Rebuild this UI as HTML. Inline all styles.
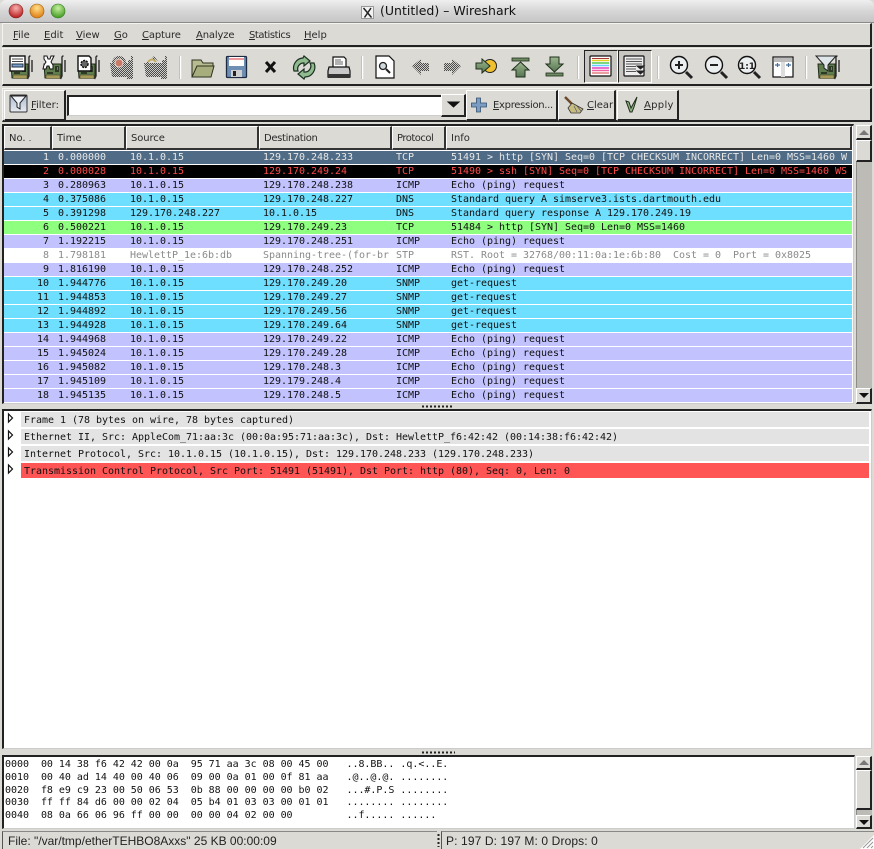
<!DOCTYPE html>
<html><head><meta charset="utf-8"><title>Wireshark</title>
<style>
html,body{margin:0;padding:0;background:#dcdad5}
body{width:874px;height:849px;overflow:hidden;position:relative;font-family:"DejaVu Sans","Liberation Sans",sans-serif;font-size:10px;color:#2a2a2a}
div,span.t{position:absolute;box-sizing:border-box}
.t{white-space:pre}
.bar{background:#dcdad5;border-top:1px solid #f4f3f0;border-left:1px solid #f4f3f0;border-right:2px solid #222;border-bottom:2px solid #222}
.m{top:30px;line-height:12px;font-size:10px}
u{text-decoration:underline}
.btn{top:90px;height:31px;background:#dcdad5;border-top:1px solid #fff;border-left:1px solid #fff;border-right:2px solid #222;border-bottom:2px solid #222}
.bt{top:100px;line-height:12px;font-size:10px}
.h{top:126px;height:24px;background:#dcdad5;border-top:1px solid #fff;border-left:1px solid #fff;border-right:2px solid #333;border-bottom:2px solid #333;line-height:23px;padding-left:4px;font-size:10px}
.r{left:4px;width:848px;height:13px;overflow:hidden;font:10px/13px "DejaVu Sans Mono","Liberation Mono",monospace;letter-spacing:-.02px;color:#111}
.r span{position:absolute;top:0;white-space:pre}
.n{right:803px;text-align:right}.a{left:54px}.b{left:126px}.c{left:259px}.d{left:392px}.e{left:447px}
.i{background:#c2c2ff}.s{background:#6fdfff}.g{background:#8fff7f}
.sel{background:#4f6b85;color:#e8e8e8}.blk{background:#000;color:#ff4a4a}.w{background:#fff;color:#8a8a8a}
.dr{left:21px;width:848px;height:15px;background:#e3e3e3;font:10px/17px "DejaVu Sans Mono","Liberation Mono",monospace;letter-spacing:-.02px;padding-left:3px;white-space:pre;color:#111}
.hx{left:5px;font:10px/13px "DejaVu Sans Mono","Liberation Mono",monospace;letter-spacing:-.03px;white-space:pre;color:#111}
.sb{background:#bdbbb6;border-left:1px solid #8e8c88}
.sbb{background:#dcdad5;border-top:1px solid #fff;border-left:1px solid #fff;border-right:2px solid #222;border-bottom:2px solid #222}
</style></head><body>

<!-- title bar -->
<div style="left:0;top:0;width:874px;height:23px;background:linear-gradient(#efefef,#d6d6d6 50%,#c6c6c6);border-radius:6px 6px 0 0;border-bottom:1px solid #8a8a8a"></div>
<span class="t" style="left:380px;top:3px;font-size:12.5px;line-height:15px;color:#111">(Untitled) – Wireshark</span>

<!-- bars -->
<div class="bar" style="left:2px;top:23px;width:870px;height:24px"></div>
<div class="bar" style="left:2px;top:48px;width:870px;height:38px"></div>
<div class="bar" style="left:2px;top:88px;width:870px;height:34px"></div>

<span class="t m" style="left:13px"><u>F</u>ile</span>
<span class="t m" style="left:44px"><u>E</u>dit</span>
<span class="t m" style="left:76px"><u>V</u>iew</span>
<span class="t m" style="left:114px"><u>G</u>o</span>
<span class="t m" style="left:142px;letter-spacing:-.15px"><u>C</u>apture</span>
<span class="t m" style="left:196px;letter-spacing:-.15px"><u>A</u>nalyze</span>
<span class="t m" style="left:249px;letter-spacing:-.45px"><u>S</u>tatistics</span>
<span class="t m" style="left:304px"><u>H</u>elp</span>

<!-- toggle buttons -->
<div style="left:584px;top:50px;width:34px;height:33px;background:#c8c6c1;border:1px solid #222;border-right-color:#fff;border-bottom-color:#fff"></div>
<div style="left:618px;top:50px;width:34px;height:33px;background:#c8c6c1;border:1px solid #222;border-right-color:#fff;border-bottom-color:#fff"></div>

<!-- filter row -->
<div class="btn" style="left:4px;width:62px"></div>
<span class="t bt" style="left:31px"><u>F</u>ilter:</span>
<div style="left:67px;top:95px;width:375px;height:21px;background:#fff;border-top:2px solid #222;border-left:2px solid #222;border-bottom:1px solid #ccc"></div>
<div class="btn" style="left:441px;top:94px;width:25px;height:23px"></div>
<div class="btn" style="left:466px;width:92px"></div>
<span class="t bt" style="left:493px;letter-spacing:-.3px"><u>E</u>xpression...</span>
<div class="btn" style="left:558px;width:58px"></div>
<span class="t bt" style="left:587px"><u>C</u>lear</span>
<div class="btn" style="left:617px;width:62px"></div>
<span class="t bt" style="left:644px;letter-spacing:.3px"><u>A</u>pply</span>

<!-- packet list -->
<div style="left:2px;top:124px;width:852px;height:280px;background:#fff;border:2px solid #222;border-right:1px solid #ccc;border-bottom:1px solid #ccc"></div>
<div class="h" style="left:4px;width:48px">No. <span style="font-size:8px">.</span></div>
<div class="h" style="left:52px;width:74px">Time</div>
<div class="h" style="left:126px;width:133px;letter-spacing:-.1px">Source</div>
<div class="h" style="left:259px;width:133px;letter-spacing:-.35px">Destination</div>
<div class="h" style="left:392px;width:54px;letter-spacing:-.5px">Protocol</div>
<div class="h" style="left:446px;width:406px">Info</div>

<div class="r sel" style="top:151px"><span class="n">1</span><span class="a">0.000000</span><span class="b">10.1.0.15</span><span class="c">129.170.248.233</span><span class="d">TCP</span><span class="e">51491 &gt; http [SYN] Seq=0 [TCP CHECKSUM INCORRECT] Len=0 MSS=1460 W</span></div>
<div class="r blk" style="top:165px"><span class="n">2</span><span class="a">0.000028</span><span class="b">10.1.0.15</span><span class="c">129.170.249.24</span><span class="d">TCP</span><span class="e">51490 &gt; ssh [SYN] Seq=0 [TCP CHECKSUM INCORRECT] Len=0 MSS=1460 WS</span></div>
<div class="r i" style="top:179px"><span class="n">3</span><span class="a">0.280963</span><span class="b">10.1.0.15</span><span class="c">129.170.248.238</span><span class="d">ICMP</span><span class="e">Echo (ping) request</span></div>
<div class="r s" style="top:193px"><span class="n">4</span><span class="a">0.375086</span><span class="b">10.1.0.15</span><span class="c">129.170.248.227</span><span class="d">DNS</span><span class="e">Standard query A simserve3.ists.dartmouth.edu</span></div>
<div class="r s" style="top:207px"><span class="n">5</span><span class="a">0.391298</span><span class="b">129.170.248.227</span><span class="c">10.1.0.15</span><span class="d">DNS</span><span class="e">Standard query response A 129.170.249.19</span></div>
<div class="r g" style="top:221px"><span class="n">6</span><span class="a">0.500221</span><span class="b">10.1.0.15</span><span class="c">129.170.249.23</span><span class="d">TCP</span><span class="e">51484 &gt; http [SYN] Seq=0 Len=0 MSS=1460</span></div>
<div class="r i" style="top:235px"><span class="n">7</span><span class="a">1.192215</span><span class="b">10.1.0.15</span><span class="c">129.170.248.251</span><span class="d">ICMP</span><span class="e">Echo (ping) request</span></div>
<div class="r w" style="top:249px"><span class="n">8</span><span class="a">1.798181</span><span class="b">HewlettP_1e:6b:db</span><span class="c">Spanning-tree-(for-br</span><span class="d">STP</span><span class="e">RST. Root = 32768/00:11:0a:1e:6b:80  Cost = 0  Port = 0x8025</span></div>
<div class="r i" style="top:263px"><span class="n">9</span><span class="a">1.816190</span><span class="b">10.1.0.15</span><span class="c">129.170.248.252</span><span class="d">ICMP</span><span class="e">Echo (ping) request</span></div>
<div class="r s" style="top:277px"><span class="n">10</span><span class="a">1.944776</span><span class="b">10.1.0.15</span><span class="c">129.170.249.20</span><span class="d">SNMP</span><span class="e">get-request</span></div>
<div class="r s" style="top:291px"><span class="n">11</span><span class="a">1.944853</span><span class="b">10.1.0.15</span><span class="c">129.170.249.27</span><span class="d">SNMP</span><span class="e">get-request</span></div>
<div class="r s" style="top:305px"><span class="n">12</span><span class="a">1.944892</span><span class="b">10.1.0.15</span><span class="c">129.170.249.56</span><span class="d">SNMP</span><span class="e">get-request</span></div>
<div class="r s" style="top:319px"><span class="n">13</span><span class="a">1.944928</span><span class="b">10.1.0.15</span><span class="c">129.170.249.64</span><span class="d">SNMP</span><span class="e">get-request</span></div>
<div class="r i" style="top:333px"><span class="n">14</span><span class="a">1.944968</span><span class="b">10.1.0.15</span><span class="c">129.170.249.22</span><span class="d">ICMP</span><span class="e">Echo (ping) request</span></div>
<div class="r i" style="top:347px"><span class="n">15</span><span class="a">1.945024</span><span class="b">10.1.0.15</span><span class="c">129.170.249.28</span><span class="d">ICMP</span><span class="e">Echo (ping) request</span></div>
<div class="r i" style="top:361px"><span class="n">16</span><span class="a">1.945082</span><span class="b">10.1.0.15</span><span class="c">129.170.248.3</span><span class="d">ICMP</span><span class="e">Echo (ping) request</span></div>
<div class="r i" style="top:375px"><span class="n">17</span><span class="a">1.945109</span><span class="b">10.1.0.15</span><span class="c">129.179.248.4</span><span class="d">ICMP</span><span class="e">Echo (ping) request</span></div>
<div class="r i" style="top:389px"><span class="n">18</span><span class="a">1.945135</span><span class="b">10.1.0.15</span><span class="c">129.170.248.5</span><span class="d">ICMP</span><span class="e">Echo (ping) request</span></div>

<!-- list scrollbar -->
<div class="sb" style="left:856px;top:125px;width:16px;height:279px"></div>
<div class="sbb" style="left:856px;top:125px;width:16px;height:15px"></div>
<div class="sbb" style="left:856px;top:140px;width:16px;height:22px"></div>
<div class="sbb" style="left:856px;top:388px;width:16px;height:16px"></div>

<!-- details pane -->
<div style="left:2px;top:409px;width:870px;height:340px;background:#fff;border-top:2px solid #222;border-left:2px solid #222;border-bottom:1px solid #ccc;border-right:1px solid #ccc"></div>
<div class="dr" style="top:412px">Frame 1 (78 bytes on wire, 78 bytes captured)</div>
<div class="dr" style="top:429px">Ethernet II, Src: AppleCom_71:aa:3c (00:0a:95:71:aa:3c), Dst: HewlettP_f6:42:42 (00:14:38:f6:42:42)</div>
<div class="dr" style="top:446px">Internet Protocol, Src: 10.1.0.15 (10.1.0.15), Dst: 129.170.248.233 (129.170.248.233)</div>
<div class="dr" style="top:463px;background:#ff5555">Transmission Control Protocol, Src Port: 51491 (51491), Dst Port: http (80), Seq: 0, Len: 0</div>

<!-- hex pane -->
<div style="left:2px;top:755px;width:853px;height:74px;background:#fff;border-top:2px solid #222;border-left:2px solid #222;border-bottom:1px solid #ccc;border-right:1px solid #ccc"></div>
<div class="hx" style="top:758px">0000  00 14 38 f6 42 42 00 0a  95 71 aa 3c 08 00 45 00   ..8.BB.. .q.&lt;..E.</div>
<div class="hx" style="top:771px">0010  00 40 ad 14 40 00 40 06  09 00 0a 01 00 0f 81 aa   .@..@.@. ........</div>
<div class="hx" style="top:784px">0020  f8 e9 c9 23 00 50 06 53  0b 88 00 00 00 00 b0 02   ...#.P.S ........</div>
<div class="hx" style="top:796px">0030  ff ff 84 d6 00 00 02 04  05 b4 01 03 03 00 01 01   ........ ........</div>
<div class="hx" style="top:809px">0040  08 0a 66 06 96 ff 00 00  00 00 04 02 00 00         ..f..... ......</div>
<div class="sb" style="left:856px;top:756px;width:16px;height:73px"></div>
<div class="sbb" style="left:856px;top:756px;width:16px;height:14px"></div>
<div class="sbb" style="left:856px;top:770px;width:16px;height:40px"></div>
<div class="sbb" style="left:856px;top:815px;width:16px;height:14px"></div>

<!-- status bar -->
<div style="left:2px;top:831px;width:435px;height:18px;border-top:1px solid #888;border-left:1px solid #555"></div>
<div style="left:441px;top:831px;width:433px;height:18px;border-top:1px solid #888;border-left:1px solid #555"></div>
<span class="t" style="left:8px;top:835px;font:12px/13px 'Liberation Sans',sans-serif;color:#222">File: "/var/tmp/etherTEHBO8Axxs" 25 KB 00:00:09</span>
<span class="t" style="left:446px;top:835px;font:12px/13px 'Liberation Sans',sans-serif;letter-spacing:.12px;color:#222">P: 197 D: 197 M: 0 Drops: 0</span>

<!-- all icons -->
<svg width="874" height="849" viewBox="0 0 874 849" style="position:absolute;left:0;top:0" xmlns="http://www.w3.org/2000/svg">
<defs>
<radialGradient id="rd" cx=".5" cy=".3" r=".7"><stop offset="0" stop-color="#f8b0b0"/><stop offset="1" stop-color="#b81818"/></radialGradient>
<radialGradient id="or" cx=".5" cy=".3" r=".7"><stop offset="0" stop-color="#ffe08a"/><stop offset="1" stop-color="#e07a10"/></radialGradient>
<radialGradient id="gr" cx=".5" cy=".3" r=".7"><stop offset="0" stop-color="#c8f0a0"/><stop offset="1" stop-color="#3f9a20"/></radialGradient>
<linearGradient id="arr" x1="0" y1="0" x2="0" y2="1"><stop offset="0" stop-color="#9bb78e"/><stop offset="1" stop-color="#577552"/></linearGradient>
<linearGradient id="fn" x1="0" y1="0" x2="0" y2="1"><stop offset="0" stop-color="#a8b8d0"/><stop offset="1" stop-color="#e8ecf2"/></linearGradient>
<pattern id="st" width="2" height="2" patternUnits="userSpaceOnUse"><rect width="2" height="2" fill="#cfcdc8"/><rect width="1" height="1" fill="#4a4a4a"/><rect x="1" y="1" width="1" height="1" fill="#4a4a4a"/></pattern>
<g id="nic">
<path d="M1 9H18V23H2z" fill="#5f7d4e" stroke="#1f2b18"/>
<path d="M3 20h14v3.500H3z" fill="#a59a58" stroke="#3a3a20" stroke-width=".5"/>
<path d="M12 11h4v6h-4zM4 17h6v2H4z" fill="#2e3a26"/>
<path d="M14 12h1v3h-1z" fill="#c55"/>
<path d="M20.500 1q-2 0-1.500 3V21l-1.500 3M22 5V17" fill="none" stroke="#2b2b2b" stroke-width="1.400"/>
</g>
<g id="nicd">
<path d="M0 8H18V5h3V1h2V24H17V22H2z" fill="url(#st)"/>
</g>
</defs>

<!-- traffic lights -->
<circle cx="16" cy="11" r="7" fill="url(#rd)" stroke="#7a2020" stroke-width=".6"/>
<circle cx="37" cy="11" r="7" fill="url(#or)" stroke="#9a6010" stroke-width=".6"/>
<circle cx="58" cy="11" r="7" fill="url(#gr)" stroke="#2f7a20" stroke-width=".6"/>
<!-- X icon -->
<rect x="361.500" y="6.500" width="12" height="12" fill="#f2f2f2" stroke="#999"/>
<path d="M363.500 8l8 9.500M371 8l-6.500 9.500" stroke="#222" stroke-width="1.500" fill="none"/>

<!-- capture interfaces -->
<g transform="translate(10,55)"><use href="#nic"/><rect x="0" y="1" width="15" height="15" fill="#fff" stroke="#111" stroke-width="1.400"/><path d="M2 4h11M2 6.500h11" stroke="#444"/><rect x="2" y="9" width="11" height="3" fill="#7aa0d0" stroke="#234"/></g>
<g transform="translate(43,55)"><use href="#nic"/><path d="M1 1l3 0 1 3h2l1-3h3l-2 4-1 2 2 3 0 4h-3l-1-3h-2l-1 3h-3l1-4 2-3-2-3z" fill="#fff" stroke="#111"/></g>
<g transform="translate(77,55)"><use href="#nic"/><path d="M1 1h11l2 2v13H1z" fill="#fff" stroke="#111" stroke-width="1.400"/><circle cx="7.500" cy="9" r="3.500" fill="#666" stroke="#111" stroke-width="1.500" stroke-dasharray="2 1"/></g>
<g transform="translate(110,55)"><use href="#nicd"/><circle cx="9" cy="8" r="7" fill="url(#st)"/><circle cx="9" cy="8" r="4" fill="#c87a66" stroke="#e8d8d0"/></g>
<g transform="translate(144,55)"><use href="#nicd"/><path d="M1 12A8 9 0 0 1 16 9L10 1z" fill="url(#st)"/><path d="M4 7q4-5 8 0" fill="none" stroke="#c0a858" stroke-width="1.800"/></g>
<path d="M180.500 56V79" stroke="#fff" stroke-width="1.500"/><path d="M179.500 56V79" stroke="#aaa" stroke-width=".6"/>

<!-- open -->
<path d="M192 76V60h9l2 3h10v3h-12l-3 10z" fill="#b8bb90" stroke="#2e3320"/>
<path d="M192 77l5-11h17l-3 11z" fill="#a8ad7e" stroke="#2e3320"/>
<!-- save -->
<rect x="226.500" y="56.500" width="20" height="21" rx="1" fill="#6f8eb3" stroke="#1c2b40" stroke-width="1.300"/>
<rect x="229" y="57" width="15" height="9" fill="#fff"/><path d="M229 59h15" stroke="#d55" stroke-width="1.200"/>
<rect x="231" y="70" width="11" height="7" fill="#cfcfcf"/><rect x="233" y="71" width="3" height="5" fill="#222"/>
<!-- close x -->
<path d="M266 62l9 10M275 62l-9 10" stroke="#111" stroke-width="3" fill="none"/>
<!-- reload -->
<path d="M294 71a10 10 0 0 1 9-13l1-2 6 5-6 5v-3a6 6 0 0 0-6 8z" fill="#8fbb8e" stroke="#1c3022" stroke-width="1.200"/>
<path d="M314 63a10 10 0 0 1-9 14l-1 2-6-5 6-5v3a6 6 0 0 0 6-9z" fill="#8fbb8e" stroke="#1c3022" stroke-width="1.200"/>
<!-- print -->
<path d="M333 57h11l2 2v9h-13z" fill="#fff" stroke="#111" stroke-width="1.200"/><path d="M335 60h6M335 62h8M335 64h8" stroke="#666"/>
<path d="M329 67h20l1 4v6h-22v-6z" fill="#c8c8c8" stroke="#111" stroke-width="1.200"/><rect x="328" y="74" width="22" height="4" fill="#333"/>
<path d="M362.500 56V79" stroke="#fff" stroke-width="1.500"/><path d="M361.500 56V79" stroke="#aaa" stroke-width=".6"/>
<!-- find -->
<path d="M376 56h13l5 5v17h-18z" fill="#fff" stroke="#111" stroke-width="1.200"/>
<circle cx="383" cy="66" r="3.500" fill="#cfd8da" stroke="#222" stroke-width="1.300"/><path d="M386 69l4 4" stroke="#222" stroke-width="2"/>
<!-- back -->
<path d="M412 66l9-7v4h8v8h-8v4z" fill="url(#st)"/>
<!-- forward -->
<path d="M461 66l-9-7v4h-8v8h8v4z" fill="url(#st)"/>
<!-- go to -->
<circle cx="490" cy="66" r="6.500" fill="#f0c030" stroke="#222"/>
<path d="M476 63h6v-4l8 7-8 7v-4h-6z" fill="url(#arr)" stroke="#1e2e1a"/>
<!-- top -->
<rect x="512" y="58" width="17" height="3" fill="#6f8a64" stroke="#1e2e1a" stroke-width=".8"/>
<path d="M520.500 62l8.500 8h-4v7h-9v-7h-4z" fill="url(#arr)" stroke="#1e2e1a"/>
<!-- bottom -->
<rect x="546" y="73" width="17" height="3" fill="#6f8a64" stroke="#1e2e1a" stroke-width=".8"/>
<path d="M554.500 72l-8.500-8h4v-7h9v7h4z" fill="url(#arr)" stroke="#1e2e1a"/>
<path d="M578.500 56V79" stroke="#fff" stroke-width="1.500"/><path d="M577.500 56V79" stroke="#aaa" stroke-width=".6"/>

<!-- colorize -->
<rect x="590" y="56" width="21" height="20" rx="1" fill="#fff" stroke="#111" stroke-width="1.200"/>
<path d="M592 58.500h17" stroke="#a33"/><path d="M592 60.500h17" stroke="#e8d020" stroke-width="1.500"/><path d="M592 63h17" stroke="#50c850" stroke-width="1.500"/><path d="M592 65.500h17" stroke="#60d0ff" stroke-width="1.500"/><path d="M592 68h17" stroke="#e040c0" stroke-width="1.500"/><path d="M592 70.500h17" stroke="#f060a0" stroke-width="1.500"/><path d="M592 73h17" stroke="#d04040"/>
<!-- autoscroll -->
<rect x="624" y="56" width="20" height="20" rx="1" fill="#eee" stroke="#111" stroke-width="1.200"/>
<path d="M626 59h16M626 61.500h16M626 64h16M626 66.500h10M626 69h10M626 71.500h10" stroke="#555" stroke-width=".9"/>
<path d="M637 66h7l-3.500 3zM637 71h7l-3.500 3z" fill="#222" stroke="#222"/>
<path d="M658.500 56V79" stroke="#fff" stroke-width="1.500"/><path d="M657.500 56V79" stroke="#aaa" stroke-width=".6"/>

<!-- zooms -->
<g fill="#eceff0" stroke="#111" stroke-width="1.400">
<circle cx="679" cy="65" r="8.500"/><circle cx="714" cy="65" r="8.500"/><circle cx="747" cy="65" r="8.500"/>
</g>
<path d="M686 72l6 6M721 72l6 6M754 72l6 6" stroke="#222" stroke-width="3"/>
<path d="M675 65h8M679 61v8M710 65h8" stroke="#222" stroke-width="2"/>
<text x="747" y="69" font-family="DejaVu Sans" font-size="9" font-weight="700" text-anchor="middle" fill="#222">1:1</text>
<!-- resize columns -->
<rect x="773" y="57" width="20" height="20" fill="#fff" stroke="#111" stroke-width="1.200"/>
<rect x="774" y="58" width="18" height="4" fill="#bbb"/><rect x="781" y="62" width="4" height="15" fill="#ddd"/>
<path d="M775 65h5M777.500 63v4M786 65h5M788.500 63v4" stroke="#4a6f9a" stroke-width="1.200"/>
<path d="M806.500 56V79" stroke="#fff" stroke-width="1.500"/><path d="M805.500 56V79" stroke="#aaa" stroke-width=".6"/>
<!-- capture filters -->
<g transform="translate(817,55)"><use href="#nic"/><path d="M-1 1H19L11 10V16L7 13V10z" fill="#dfe6ea" stroke="#222"/></g>

<!-- filter funnel -->
<rect x="10" y="95" width="17" height="17" rx="1" fill="url(#fn)" stroke="#333"/>
<path d="M11 96h15l-6 7v6l-3-2v-4z" fill="#f0f4f8" stroke="#222"/>
<!-- combo arrow -->
<path d="M448 102h11l-5.500 5z" fill="#111" stroke="#111"/>
<!-- plus -->
<path d="M477 98h4v5h6v4h-6v5h-4v-5h-5v-4h5z" fill="#7c9cc4" stroke="#31506f" stroke-width=".8" transform="translate(-.5 0)"/>
<!-- broom -->
<path d="M565 97l8 8" stroke="#6a4a28" stroke-width="2.500"/>
<path d="M572 103l11 6-3 4-9 0-3-5z" fill="#c8bd80" stroke="#333" stroke-width=".8"/>
<path d="M574 106l3 6M577 106l4 5" stroke="#556" stroke-width=".7"/>
<!-- check -->
<path d="M626 101l3 1 2 6 6-11-3 10-2 5h-2z" fill="#8fae82" stroke="#1e2e1a"/>
<!-- scroll arrows -->
<path d="M859 135l5-5 5 5z" fill="#777"/>
<path d="M859 393h10l-5 5z" fill="#111"/>
<path d="M859 765l5-5 5 5z" fill="#777"/>
<path d="M859 820h10l-5 5z" fill="#111"/>
<!-- expanders -->
<g fill="#fff" stroke="#111" stroke-width="1.200">
<path d="M8.500 414v8l4-4z"/><path d="M8.500 431v8l4-4z"/><path d="M8.500 448v8l4-4z"/><path d="M8.500 465v8l4-4z"/>
</g>
<!-- pane handles -->
<path d="M422 406.500h30M422 752.500h33" stroke="#222" stroke-dasharray="2 2" stroke-width="2"/>
<!-- status grip -->
<path d="M438.500 834v13" stroke="#222" stroke-width="2" stroke-dasharray="2 2"/>
<!-- corner grip -->
<path d="M860 849L874 835V849z" fill="#fff"/>
<path d="M863 848l10-10M867 848l6-6M871 848l2-2" stroke="#999"/>
</svg>
</body></html>
